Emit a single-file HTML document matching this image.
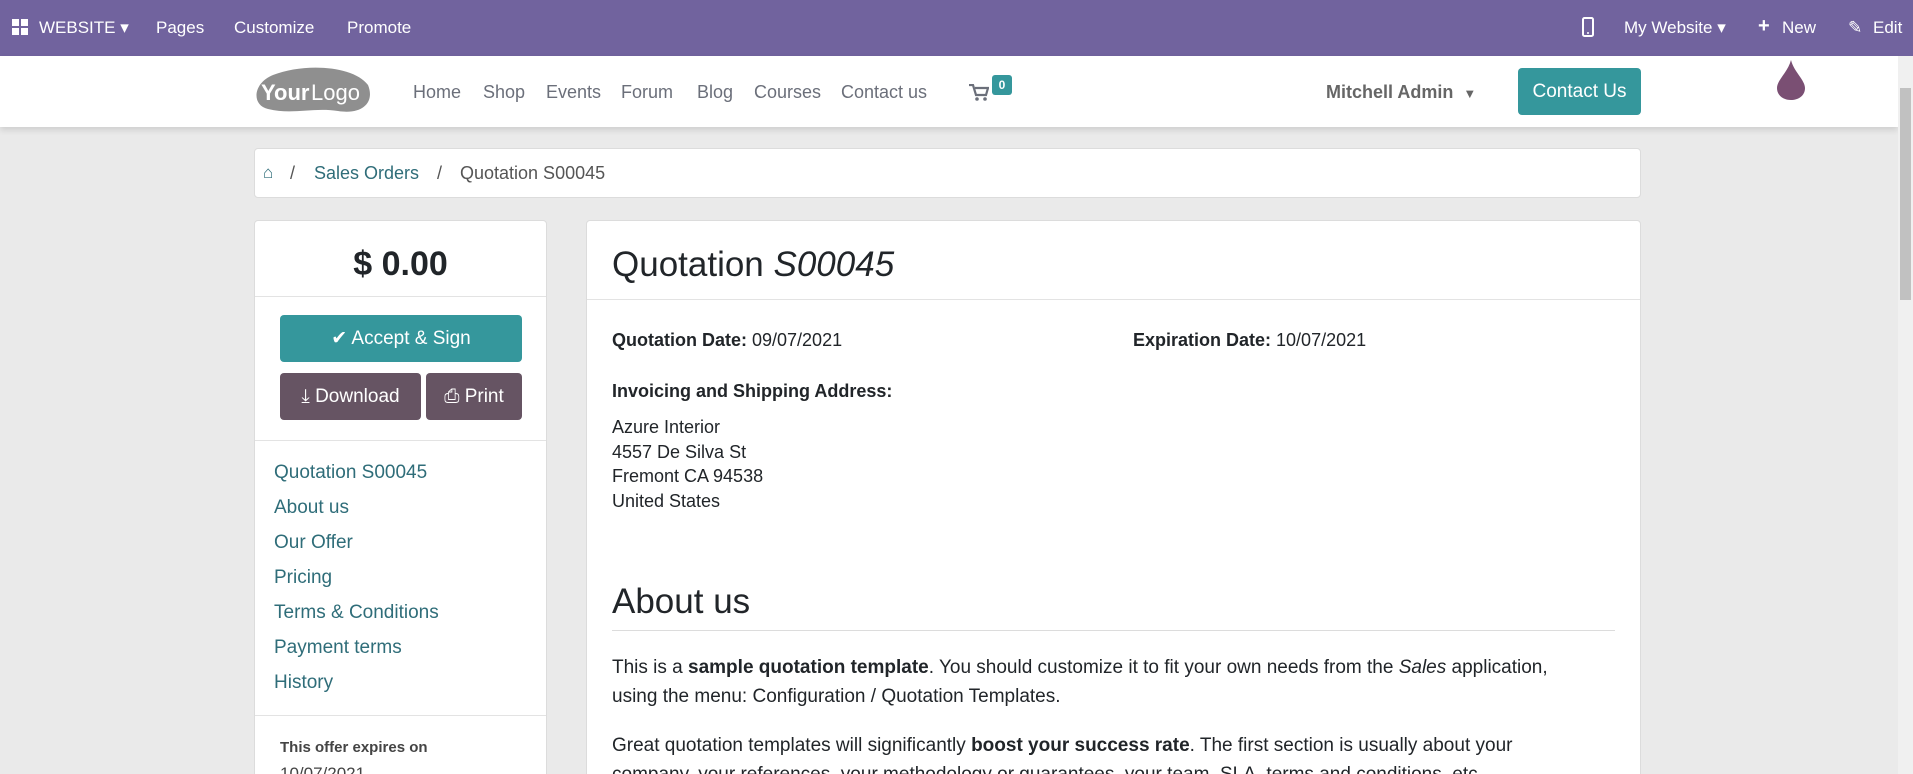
<!DOCTYPE html>
<html><head><meta charset="utf-8"><style>
*{box-sizing:border-box;margin:0;padding:0}
html,body{width:1913px;height:774px;overflow:hidden}
body{background:#eaeaea;font-family:"Liberation Sans",sans-serif;color:#212529;position:relative}
.abs{position:absolute;white-space:nowrap}
#top{position:absolute;left:0;top:0;width:1913px;height:56px;background:#71639e;color:#fff;font-size:17px}
#top .abs{top:18px}
#nav{position:absolute;left:0;top:56px;width:1898px;height:71px;background:#fff;box-shadow:0 3px 6px rgba(0,0,0,.12)}
.menu{color:#6b6f7a;font-size:18px;top:26px}
.card{position:absolute;background:#fff;border:1px solid #dcdcdc;border-radius:4px;overflow:hidden}
.lnk{color:#2f6d79;font-size:19px;left:19px}
.btn{position:absolute;color:#fff;border-radius:4px;font-size:19px;display:flex;align-items:center;justify-content:center;gap:6px}
.t{font-size:18px}
.p{font-size:19px}
</style></head><body>
<div id="top">
 <svg class="abs" style="left:12px;top:19px" width="16" height="16" viewBox="0 0 16 16"><rect x="0" y="0" width="7" height="7" fill="#fff"/><rect x="9" y="0" width="7" height="7" fill="#fff"/><rect x="0" y="9" width="7" height="7" fill="#fff"/><rect x="9" y="9" width="7" height="7" fill="#fff"/></svg>
 <span class="abs" style="left:39px">WEBSITE ▾</span>
 <span class="abs" style="left:156px">Pages</span>
 <span class="abs" style="left:234px">Customize</span>
 <span class="abs" style="left:347px">Promote</span>
 <svg class="abs" style="left:1582px;top:17px" width="12" height="20" viewBox="0 0 12 20"><rect x="1" y="1" width="10" height="18" rx="1.5" fill="none" stroke="#fff" stroke-width="2"/><circle cx="6" cy="16" r="1" fill="#fff"/></svg>
 <span class="abs" style="left:1624px">My Website ▾</span>
 <span class="abs" style="left:1758px;font-weight:bold;font-size:20px;top:15px">+</span>
 <span class="abs" style="left:1782px">New</span>
 <span class="abs" style="left:1848px">✎</span>
 <span class="abs" style="left:1873px">Edit</span>
</div>
<div id="nav">
 <svg class="abs" style="left:253px;top:11px" width="120" height="50" viewBox="0 0 120 50"><path d="M20 8 C50 -4 100 -2 115 18 C122 35 110 48 85 44 C60 40 40 48 15 42 C-2 38 0 16 20 8Z" fill="#8f8f8f"/><text x="8" y="33" font-family="Liberation Sans" font-size="22" font-weight="bold" fill="#fff">Your</text><text x="58" y="33" font-family="Liberation Sans" font-size="22" fill="#fff">Logo</text></svg>
 <span class="abs menu" style="left:413px">Home</span>
 <span class="abs menu" style="left:483px">Shop</span>
 <span class="abs menu" style="left:546px">Events</span>
 <span class="abs menu" style="left:621px">Forum</span>
 <span class="abs menu" style="left:697px">Blog</span>
 <span class="abs menu" style="left:754px">Courses</span>
 <span class="abs menu" style="left:841px">Contact us</span>
 <svg class="abs" style="left:969px;top:28px" width="20" height="18" viewBox="0 0 20 18"><path d="M0 1h4l3 10h10l2-7H6" fill="none" stroke="#6b6f7a" stroke-width="2.2"/><circle cx="8" cy="15" r="1.8" fill="#6b6f7a"/><circle cx="16" cy="15" r="1.8" fill="#6b6f7a"/></svg>
 <div class="abs" style="left:992px;top:19px;width:20px;height:20px;background:#35979c;color:#fff;border-radius:3px;font-size:12px;font-weight:bold;text-align:center;line-height:20px">0</div>
 <span class="abs" style="left:1326px;top:26px;font-size:18px;font-weight:bold;color:#666">Mitchell Admin &nbsp;<span style="font-size:13px">▼</span></span>
 <div class="btn" style="left:1518px;top:12px;width:123px;height:47px;background:#35979c">Contact Us</div>
 <svg class="abs" style="left:1776px;top:4px" width="30" height="40" viewBox="0 0 30 40"><path d="M15 0 C18 12 29 20 29 28 C29 36 22 40 15 40 C8 40 1 36 1 28 C1 20 12 12 15 0Z" fill="#7a4f73"/></svg>
</div>
<div class="abs" style="left:1898px;top:56px;width:15px;height:718px;background:#f0f0f0"></div>
<div class="abs" style="left:1900px;top:88px;width:11px;height:212px;background:#c1c1c1"></div>

<div class="card" style="left:254px;top:148px;width:1387px;height:50px">
 <span class="abs" style="left:8px;top:14px;color:#2f6d79;font-size:17px">⌂</span>
 <span class="abs t" style="left:35px;top:14px;color:#555">/</span>
 <span class="abs t" style="left:59px;top:14px;color:#2f6d79">Sales Orders</span>
 <span class="abs t" style="left:182px;top:14px;color:#555">/</span>
 <span class="abs t" style="left:205px;top:14px;color:#555">Quotation S00045</span>
</div>

<div class="card" style="left:254px;top:220px;width:293px;height:560px">
 <div class="abs" style="left:0;width:291px;top:24px;text-align:center;font-size:34px;font-weight:bold">$ 0.00</div>
 <div class="abs" style="left:0;top:75px;width:291px;height:1px;background:#e3e3e3"></div>
 <div class="btn" style="left:25px;top:94px;width:242px;height:47px;background:#35979c">✔ Accept &amp; Sign</div>
 <div class="btn" style="left:25px;top:152px;width:141px;height:47px;background:#665463">⤓ Download</div>
 <div class="btn" style="left:171px;top:152px;width:96px;height:47px;background:#665463">⎙ Print</div>
 <div class="abs" style="left:0;top:219px;width:291px;height:1px;background:#e3e3e3"></div>
 <span class="abs lnk" style="top:241px">Quotation S00045</span>
 <span class="abs lnk" style="top:276px">About us</span>
 <span class="abs lnk" style="top:311px">Our Offer</span>
 <span class="abs lnk" style="top:346px">Pricing</span>
 <span class="abs lnk" style="top:381px">Terms &amp; Conditions</span>
 <span class="abs lnk" style="top:416px">Payment terms</span>
 <span class="abs lnk" style="top:451px">History</span>
 <div class="abs" style="left:0;top:494px;width:291px;height:1px;background:#e3e3e3"></div>
 <span class="abs" style="left:25px;top:518px;font-size:15px;font-weight:bold;color:#444">This offer expires on</span>
 <span class="abs" style="left:25px;top:543px;font-size:17px;color:#444">10/07/2021</span>
</div>

<div class="card" style="left:586px;top:220px;width:1055px;height:560px">
 <span class="abs" style="left:25px;top:24px;font-size:35px">Quotation <i>S00045</i></span>
 <div class="abs" style="left:0;top:78px;width:1053px;height:1px;background:#e3e3e3"></div>
 <span class="abs t" style="left:25px;top:109px"><b>Quotation Date:</b> 09/07/2021</span>
 <span class="abs t" style="left:546px;top:109px"><b>Expiration Date:</b> 10/07/2021</span>
 <span class="abs t" style="left:25px;top:160px;font-weight:bold">Invoicing and Shipping Address:</span>
 <div class="abs t" style="left:25px;top:194px;line-height:24.6px">Azure Interior<br>4557 De Silva St<br>Fremont CA 94538<br>United States</div>
 <span class="abs" style="left:25px;top:361px;font-size:35px">About us</span>
 <div class="abs" style="left:25px;top:409px;width:1003px;height:1px;background:#dcdcdc"></div>
 <div class="abs p" style="left:25px;top:432px;line-height:29px">This is a <b>sample quotation template</b>. You should customize it to fit your own needs from the <i>Sales</i> application,<br>using the menu: Configuration / Quotation Templates.</div>
 <div class="abs p" style="left:25px;top:510px;line-height:29px">Great quotation templates will significantly <b>boost your success rate</b>. The first section is usually about your<br>company, your references, your methodology or guarantees, your team, SLA, terms and conditions, etc.</div>
</div>
</body></html>
